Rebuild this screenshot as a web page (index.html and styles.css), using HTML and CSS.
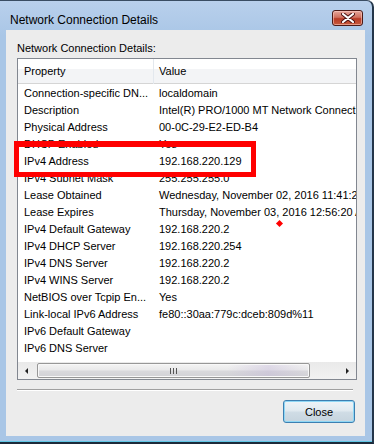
FILE: index.html
```html
<!DOCTYPE html>
<html lang="en">
<head>
  <meta charset="UTF-8" />
  <title>Network Connection Details</title>
  <link rel="stylesheet" href="styles.css">
</head>
<body>
  <div class="window">
    <div class="titlebar">
      <span class="title">Network Connection Details</span>
      <button class="close-x" aria-label="Close">
        <svg width="14" height="10" viewBox="0 0 14 10">
          <path d="M2 1 L12 9 M12 1 L2 9" stroke="#4a1010" stroke-width="4" stroke-linecap="round"/>
          <path d="M2 1 L12 9 M12 1 L2 9" stroke="#ffffff" stroke-width="2.2" stroke-linecap="round"/>
        </svg>
      </button>
    </div>

    <div class="client">
      <div class="group-label">Network Connection Details:</div>

      <div class="list">
        <div class="list-head">
          <div class="head-cell head-prop">Property</div>
          <div class="head-cell">Value</div>
        </div>

        <div class="rows">
          <div class="row"><span>Connection-specific DN...</span><span>localdomain</span></div>
          <div class="row"><span>Description</span><span>Intel(R) PRO/1000 MT Network Connection</span></div>
          <div class="row"><span>Physical Address</span><span>00-0C-29-E2-ED-B4</span></div>
          <div class="row"><span>DHCP Enabled</span><span>Yes</span></div>
          <div class="row"><span>IPv4 Address</span><span>192.168.220.129</span></div>
          <div class="row"><span>IPv4 Subnet Mask</span><span>255.255.255.0</span></div>
          <div class="row"><span>Lease Obtained</span><span>Wednesday, November 02, 2016 11:41:20 PM</span></div>
          <div class="row"><span>Lease Expires</span><span>Thursday, November 03, 2016 12:56:20 AM</span></div>
          <div class="row"><span>IPv4 Default Gateway</span><span>192.168.220.2</span></div>
          <div class="row"><span>IPv4 DHCP Server</span><span>192.168.220.254</span></div>
          <div class="row"><span>IPv4 DNS Server</span><span>192.168.220.2</span></div>
          <div class="row"><span>IPv4 WINS Server</span><span>192.168.220.2</span></div>
          <div class="row"><span>NetBIOS over Tcpip En...</span><span>Yes</span></div>
          <div class="row"><span>Link-local IPv6 Address</span><span>fe80::30aa:779c:dceb:809d%11</span></div>
          <div class="row"><span>IPv6 Default Gateway</span><span></span></div>
          <div class="row"><span>IPv6 DNS Server</span><span></span></div>
        </div>

        <div class="hscroll">
          <div class="arrow arrow-left"></div>
          <div class="track">
            <div class="thumb"><span class="grip"></span></div>
          </div>
          <div class="arrow arrow-right"></div>
        </div>
      </div>

      <div class="separator"></div>

      <div class="actions">
        <button class="btn">Close</button>
      </div>
    </div>

    <!-- marks drawn over the screenshot -->
    <div class="mark-box"></div>
    <div class="mark-dot"></div>
  </div>
</body>
</html>
```

FILE: styles.css
```css
html, body {
  margin: 0;
  padding: 0;
}

body {
  width: 374px;
  height: 444px;
  overflow: hidden;
  font-family: "Liberation Sans", Arial, sans-serif;
  font-size: 11px;
  color: #000;
}

.window {
  position: relative;
  width: 374px;
  height: 444px;
  box-sizing: border-box;
  display: flex;
  flex-direction: column;
  padding: 0 7px 6px 6px;
  background: linear-gradient(180deg, #b9d0ec 0%, #a9c6e6 8%, #a9c6e6 100%);
  border-top: 1px solid #3a4d63;
  border-right: 2px solid #24364a;
  border-bottom: 2px solid #1c2a3a;
  border-radius: 0 7px 0 0;
  box-shadow: inset 0 -1px 0 #5fc6e4;
}

.titlebar {
  height: 29px;
  flex: none;
  display: flex;
  align-items: flex-start;
  justify-content: space-between;
  padding-left: 4px;
}

.title {
  font-size: 12px;
  line-height: 14px;
  margin-top: 12px;
  color: #000;
}

.close-x {
  width: 31px;
  height: 16px;
  margin-top: 9px;
  margin-right: 2px;
  padding: 0;
  border: 1px solid #4b1a17;
  border-radius: 3px;
  background: linear-gradient(180deg, #e6a79c 0%, #d0705f 45%, #b83b26 55%, #c65a3d 100%);
  box-shadow: inset 0 0 0 1px rgba(255, 210, 200, 0.55);
  display: flex;
  align-items: center;
  justify-content: center;
}

.client {
  flex: 1;
  display: flex;
  flex-direction: column;
  background: #ececec;
  padding: 0 8px 0 11px;
}

.group-label {
  line-height: 14px;
  margin-top: 11px;
  margin-bottom: 3px;
}

.list {
  height: 322px;
  box-sizing: border-box;
  border: 1px solid #828790;
  background: #fff;
  display: flex;
  flex-direction: column;
  overflow: hidden;
}

.list-head {
  height: 25px;
  flex: none;
  box-sizing: border-box;
  display: grid;
  grid-template-columns: 136px 1fr;
  background: linear-gradient(180deg, #ffffff 0%, #ffffff 42%, #f3f4f6 43%, #f3f4f6 100%);
  border-bottom: 1px solid #d5d5d5;
}

.head-cell {
  line-height: 25px;
  padding-left: 6px;
  white-space: nowrap;
}

.head-cell + .head-cell {
  padding-left: 5px;
}

.head-prop {
  border-right: 1px solid #e3e8ee;
}

.rows {
  flex: 1;
  padding-top: 1px;
}

.row {
  height: 17px;
  line-height: 17px;
  display: grid;
  grid-template-columns: 136px 1fr;
}

.row span {
  padding-left: 6px;
  white-space: nowrap;
  overflow: hidden;
}

.row span + span {
  padding-left: 5px;
  overflow: visible;
}

.hscroll {
  height: 17px;
  flex: none;
  display: flex;
  background: linear-gradient(180deg, #e9e9e9 0%, #f2f2f2 100%);
}

.arrow {
  width: 17px;
  flex: none;
  display: flex;
  align-items: center;
  justify-content: center;
}

.arrow::before {
  content: "";
  width: 0;
  height: 0;
  border-top: 3px solid transparent;
  border-bottom: 3px solid transparent;
}

.arrow-left::before {
  border-right: 3px solid #222;
}

.arrow-right::before {
  border-left: 3px solid #222;
}

.track {
  flex: 1;
  padding: 1px 2px;
}

.thumb {
  width: 273px;
  height: 15px;
  box-sizing: border-box;
  border: 1px solid #979797;
  border-radius: 2px;
  background:
    linear-gradient(90deg, rgba(255,255,255,0) 70%, rgba(190,175,215,0.35) 85%, rgba(255,255,255,0) 100%),
    linear-gradient(180deg, #f4f4f4 0%, #e9e9ea 45%, #d9d9dc 55%, #d2d2d6 100%);
  box-shadow: inset 0 0 0 1px #f8f8f8;
  display: flex;
  align-items: center;
  justify-content: center;
}

.grip {
  width: 7px;
  height: 6px;
  background: repeating-linear-gradient(90deg, #555 0 1px, transparent 1px 3px);
}

.separator {
  height: 1px;
  margin: 9px 4px 0 0;
  background: #a0a0a0;
  border-bottom: 1px solid #ffffff;
}

.actions {
  display: flex;
  justify-content: flex-end;
  margin-top: 9px;
  padding-right: 2px;
}

.btn {
  width: 72px;
  height: 23px;
  padding: 0;
  font-family: "Liberation Sans", Arial, sans-serif;
  font-size: 11px;
  color: #000;
  border: 1px solid #3c7fb1;
  border-radius: 3px;
  background: linear-gradient(180deg, #eef4f8 0%, #e1eaf0 45%, #cfdce5 55%, #c6d4de 100%);
  box-shadow: inset 0 0 0 1px #8fd7f5;
}

.mark-box {
  position: absolute;
  left: 14px;
  top: 140px;
  width: 242px;
  height: 36px;
  box-sizing: border-box;
  border: 5px solid #ff0000;
  border-top-width: 6px;
}

.mark-dot {
  position: absolute;
  left: 277px;
  top: 220px;
  width: 5px;
  height: 5px;
  background: #ff0000;
  transform: rotate(45deg);
}
```
